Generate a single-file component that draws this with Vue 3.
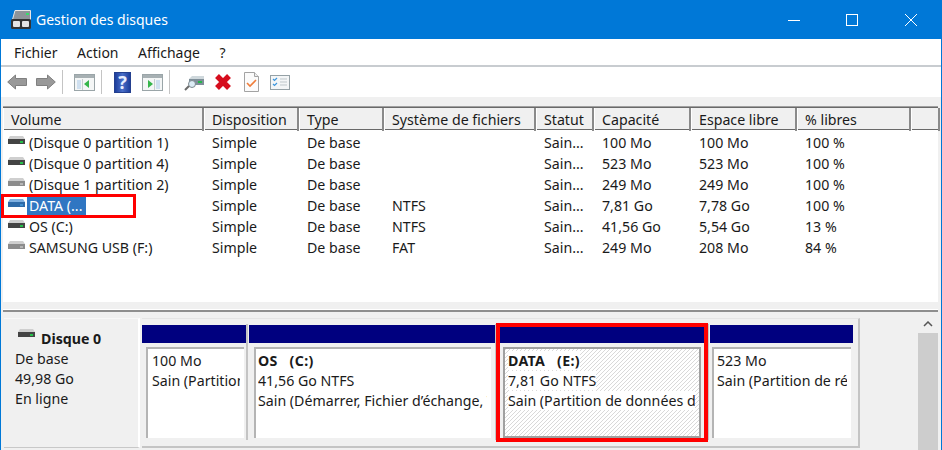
<script setup>
const columns = [
  { label: 'Volume', width: 201 },
  { label: 'Disposition', width: 95 },
  { label: 'Type', width: 85 },
  { label: 'Système de fichiers', width: 152 },
  { label: 'Statut', width: 58 },
  { label: 'Capacité', width: 97 },
  { label: 'Espace libre', width: 106 },
  { label: '% libres', width: 114 },
  { label: '', width: 29 },
]

const gridColumns = columns.map((c) => c.width + 'px').join(' ')

const volumes = [
  { name: '(Disque 0 partition 1)', fs: '', cap: '100 Mo', free: '100 Mo', pct: '100 %', green: true },
  { name: '(Disque 0 partition 4)', fs: '', cap: '523 Mo', free: '523 Mo', pct: '100 %', green: true },
  { name: '(Disque 1 partition 2)', fs: '', cap: '249 Mo', free: '249 Mo', pct: '100 %' },
  { name: 'DATA (...', fs: 'NTFS', cap: '7,81 Go', free: '7,78 Go', pct: '100 %', selected: true },
  { name: 'OS (C:)', fs: 'NTFS', cap: '41,56 Go', free: '5,54 Go', pct: '13 %', green: true },
  { name: 'SAMSUNG USB (F:)', fs: 'FAT', cap: '249 Mo', free: '208 Mo', pct: '84 %' },
]
</script>

<template>
  <div class="window">
    <div class="titlebar">
      <svg class="app-icon" width="20" height="19" viewBox="0 0 20 19">
        <path d="M4 .5h15.500v9H1.500z" fill="#8d9499" stroke="#e8e8e8" />
        <rect x="15" y="3" width="3" height="2" fill="#35e06a" />
        <rect x="0" y="9" width="20" height="10" rx="1.500" fill="#333" />
        <rect x="2" y="11" width="7" height="6" rx="1" fill="#e4e4e4" />
        <rect x="11" y="11" width="7" height="6" rx="1" fill="#e4e4e4" />
      </svg>
      <span class="title">Gestion des disques</span>
      <div class="win-buttons">
        <svg width="58" height="12" viewBox="0 0 58 12"><path d="M23 6.500h12" stroke="#fff" fill="none" /></svg>
        <svg width="58" height="12" viewBox="0 0 58 12"><rect x="23.500" y="0.500" width="11" height="11" stroke="#fff" fill="none" /></svg>
        <svg width="58" height="12" viewBox="0 0 58 12"><path d="M24 0l12 12M36 0L24 12" stroke="#fff" fill="none" /></svg>
      </div>
    </div>

    <div class="menubar">
      <span>Fichier</span>
      <span>Action</span>
      <span>Affichage</span>
      <span>?</span>
    </div>

    <div class="toolbar">
      <svg class="tb-arrow" width="20" height="16" viewBox="0 0 20 16">
        <path d="M.7 8L8.500 1v3.500h11v7h-11V15z" fill="#999" stroke="#808080" />
      </svg>
      <svg class="tb-arrow" width="20" height="16" viewBox="0 0 20 16">
        <path d="M19.300 8L11.500 1v3.500H.5v7h11V15z" fill="#999" stroke="#808080" />
      </svg>
      <i class="tb-sep"></i>
      <svg width="21" height="17" viewBox="0 0 21 17">
        <rect x="0.500" y="0.500" width="20" height="16" fill="#f4f6f6" stroke="#9aa5a8" />
        <rect x="1" y="1" width="19" height="3" fill="#a7b0b3" />
        <rect x="3" y="6" width="4" height="9" fill="#cfe0f0" />
        <path d="M15 6v8l-5-4z" fill="#35b54a" />
        <path d="M8.500 5v11" stroke="#c5cdd0" />
      </svg>
      <i class="tb-sep"></i>
      <div class="tb-help">?</div>
      <svg width="21" height="17" viewBox="0 0 21 17">
        <rect x="0.500" y="0.500" width="20" height="16" fill="#f4f6f6" stroke="#9aa5a8" />
        <rect x="1" y="1" width="19" height="3" fill="#a7b0b3" />
        <rect x="14" y="6" width="4" height="9" fill="#cfe0f0" />
        <path d="M6 6v8l5-4z" fill="#35b54a" />
        <path d="M12.500 5v11" stroke="#c5cdd0" />
      </svg>
      <i class="tb-sep"></i>
      <svg class="tb-drive" width="20" height="18" viewBox="0 0 20 18">
        <path d="M5 6h15v6H5z" fill="#7f8f99" />
        <path d="M5 6l3-3h12v3z" fill="#cfd8dc" />
        <rect x="14" y="8" width="4" height="2" fill="#25b84a" />
        <circle cx="8" cy="11" r="3.500" fill="#dcecf5" stroke="#7e8a90" />
        <path d="M5 13l-4 4" stroke="#6a6a6a" stroke-width="2" />
      </svg>
      <svg class="tb-x" width="18" height="18" viewBox="0 0 18 18">
        <path d="M3 3l12 12M15 3L3 15" fill="none" stroke="#d60d1d" stroke-width="5.500" />
      </svg>
      <svg class="tb-doc" width="15" height="20" viewBox="0 0 15 20">
        <path d="M.5.5h10l4 4v15H.5z" fill="#fbfbfb" stroke="#a3a3a3" />
        <path d="M10.500.5v4h4" fill="#eee" stroke="#a3a3a3" />
        <path d="M3 11l3 3 6-6" fill="none" stroke="#ef7d3a" stroke-width="1.600" />
      </svg>
      <svg width="20" height="15" viewBox="0 0 20 15">
        <rect x="0.500" y="0.500" width="19" height="14" fill="#f4f6f7" stroke="#95a1a6" />
        <path d="M3 4l1.500 1.500L7 3M3 9l1.500 1.500L7 8" fill="none" stroke="#3d96dc" stroke-width="1.200" />
        <path d="M10 4h7M10 7h7M10 10h7" stroke="#bfc7cb" />
      </svg>
    </div>

    <div class="content">
      <div class="table">
        <div class="thead" :style="{ gridTemplateColumns: gridColumns }">
          <div v-for="col in columns" :key="col.label" class="th">{{ col.label }}</div>
        </div>
        <div class="tbody">
          <div
            v-for="v in volumes"
            :key="v.name"
            class="tr"
            :style="{ gridTemplateColumns: gridColumns }"
          >
            <div class="td first">
              <svg width="17" height="10" viewBox="0 0 17 10" class="drive">
                <path d="M2 0h13l2 3H0z" :fill="v.selected ? '#7fb0e0' : '#cfcfcf'" />
                <rect y="3" width="17" height="5" :fill="v.selected ? '#2d6aa8' : (v.green ? '#444' : '#8c8c8c')" />
                <rect x="12" y="5" width="3" height="2" :fill="v.green ? '#25c04a' : (v.selected ? '#3f8fd0' : '#b5b5b5')" />
              </svg>
              <span :class="{ sel: v.selected }">{{ v.name }}</span>
            </div>
            <div class="td">Simple</div>
            <div class="td">De base</div>
            <div class="td">{{ v.fs }}</div>
            <div class="td">Sain...</div>
            <div class="td">{{ v.cap }}</div>
            <div class="td">{{ v.free }}</div>
            <div class="td">{{ v.pct }}</div>
          </div>
        </div>
        <div class="red-row"></div>
      </div>

      <div class="splitter"></div>

      <div class="lower">
        <div class="disk-label">
          <div class="disk-name">
            <svg width="17" height="9" viewBox="0 0 17 9">
              <path d="M2 0h13l2 3H0z" fill="#cfcfcf" />
              <rect y="3" width="17" height="5" fill="#444" />
              <rect x="12" y="5" width="3" height="2" fill="#25c04a" />
            </svg>
            <b>Disque 0</b>
          </div>
          <div>De base</div>
          <div>49,98 Go</div>
          <div>En ligne</div>
        </div>

        <div class="disk-map">
          <div class="part p1">
            <div class="bar"></div>
            <div class="cell">
              <div class="clip"><div class="blank"></div><div>100 Mo</div><div>Sain (Partition de</div></div>
            </div>
          </div>
          <div class="part p2">
            <div class="bar"></div>
            <div class="cell">
              <div class="clip"><b class="vol">OS&nbsp; (C:)</b><div>41,56 Go NTFS</div><div>Sain (Démarrer, Fichier d’échange, Vidage)</div></div>
            </div>
          </div>
          <div class="part p3">
            <div class="bar"></div>
            <div class="cell hatch">
              <div class="clip"><b class="vol"><em>DATA&nbsp; (E:)</em></b><div><em>7,81 Go NTFS</em></div><div><em>Sain (Partition de données de base)</em></div></div>
            </div>
          </div>
          <div class="part p4">
            <div class="bar"></div>
            <div class="cell">
              <div class="clip"><div class="blank"></div><div>523 Mo</div><div>Sain (Partition de récupération)</div></div>
            </div>
          </div>
          <div class="red-part"></div>
        </div>

        <div class="scroll">
          <svg width="10" height="6" viewBox="0 0 10 6"><path d="M1 5l4-4 4 4" fill="none" stroke="#555" stroke-width="1.500" /></svg>
          <div class="thumb"></div>
        </div>
      </div>
    </div>
  </div>
</template>

<style>
html, body {
  margin: 0;
  background: #fff;
}
</style>

<style scoped>
.window {
  width: 942px;
  height: 450px;
  overflow: hidden;
  box-sizing: border-box;
  border-left: 1px solid #0078d7;
  border-right: 1px solid #0078d7;
  font-family: "Noto Sans", sans-serif;
  font-size: 14.2px;
  color: #1a1a1a;
  display: flex;
  flex-direction: column;
  background: #f0f0f0;
}
.titlebar {
  height: 39px;
  flex: none;
  background: #0078d7;
  color: #fff;
  display: flex;
  align-items: center;
  padding-left: 10px;
}
.app-icon { margin-right: 5px; }
.title { font-size: 14px; }
.win-buttons {
  margin-left: auto;
  display: flex;
  padding-right: 2px;
}
.menubar {
  height: 28px;
  flex: none;
  box-sizing: border-box;
  background: #fff;
  border-bottom: 2px solid #c8ccd0;
  display: flex;
  align-items: center;
  padding-left: 13px;
  gap: 19.500px;
  font-size: 14px;
}
.toolbar {
  height: 30px;
  flex: none;
  background: #fff;
  display: flex;
  align-items: center;
  padding-left: 6px;
}
.tb-arrow + .tb-arrow { margin-left: 9px; }
.tb-sep {
  width: 1px;
  height: 24px;
  background: #c4c4c4;
  margin: 0 11px 0 6px;
}
.tb-help {
  width: 17px;
  height: 21px;
  box-sizing: border-box;
  border: 1px solid #24408f;
  background: linear-gradient(90deg, #1d3e9c, #4a6fc8 50%, #1d3e9c);
  color: #e8eeff;
  text-align: center;
  line-height: 19px;
  font-size: 18px;
  font-weight: 700;
  margin-left: 1px;
  margin-right: 11px;
}
.tb-drive { margin-left: 3px; margin-right: 10px; }
.tb-x { margin-right: 12px; }
.tb-doc { margin-right: 11px; }
.content {
  flex: 1;
  display: flex;
  flex-direction: column;
  min-height: 0;
  padding-top: 9px;
}
.table {
  position: relative;
  height: 195px;
  flex: none;
  margin-left: 2px;
  margin-right: 3px;
  background: #fff;
  border-top: 1px solid #a0a0a0;
}
.thead {
  display: grid;
  height: 23px;
  background: #f0f0f0;
  box-sizing: border-box;
  border-top: 1px solid #696969;
  border-bottom: 1px solid #696969;
}
.th {
  box-sizing: border-box;
  border-right: 2px solid #8a8a8a;
  border-left: 1px solid #fff;
  padding-left: 7px;
  line-height: 23px;
  white-space: nowrap;
}
.tbody { padding-top: 2px; }
.tr {
  display: grid;
  height: 21px;
  line-height: 21px;
}
.td {
  padding-left: 8px;
  white-space: nowrap;
  overflow: hidden;
}
.td.first {
  padding-left: 5px;
  display: flex;
  align-items: center;
  gap: 4px;
}
.drive { flex: none; margin-top: -3px; }
.sel {
  background: #3076c2;
  color: #fff;
  padding: 0 4px 0 2px;
  margin-left: -2px;
  line-height: 20px;
}
.red-row {
  position: absolute;
  left: -2px;
  top: 87px;
  box-sizing: border-box;
  width: 135px;
  height: 24px;
  border: 3px solid #f00;
}
.splitter {
  height: 2px;
  margin: 7px 3px 0 2px;
  flex: none;
  background: #8e8e8e;
  border-top: 1px solid #fff;
}
.lower {
  flex: 1;
  display: flex;
  padding-top: 6px;
  min-height: 0;
}
.disk-label {
  width: 136px;
  height: 130px;
  flex: none;
  box-sizing: border-box;
  margin-left: 3px;
  border-right: 2px solid #fff;
  border-top: 1px solid #f8f8f8;
  border-bottom: 1px solid #c8c8c8;
  padding: 7px 0 0 11px;
  line-height: 20px;
}
.disk-name {
  display: flex;
  gap: 6px;
  align-items: flex-start;
  padding-left: 3px;
}
.disk-name svg { margin-top: 3px; }
.disk-name b { margin-top: 3px; }
.disk-map {
  position: relative;
  width: 718px;
  flex: none;
  height: 130px;
  box-sizing: border-box;
  margin-left: 2px;
  border-right: 2px solid #c4c4c4;
  border-bottom: 2px solid #c4c4c4;
  border-top: 1px solid #e4e4e4;
  padding: 6px 5px 0 0;
  display: flex;
  gap: 3px;
}
.part {
  position: relative;
  display: flex;
  flex-direction: column;
  min-width: 0;
  flex: none;
}
.part + .part::before {
  content: "";
  position: absolute;
  left: -3px;
  top: -1px;
  bottom: 6px;
  width: 2px;
  background: #c4c4c4;
}
.p1 { width: 104px; }
.p2 { width: 246px; }
.p3 { width: 209px; }
.p4 { width: 143px; }
.bar {
  height: 18px;
  flex: none;
  background: #00007f;
  margin-bottom: 4px;
}
.cell {
  height: 91px;
  flex: none;
  box-sizing: border-box;
  background: #fff;
  border-top: 2px solid #b4b4b4;
  border-left: 2px solid #b4b4b4;
  padding: 2px 4px 0 4px;
  line-height: 20px;
}
.clip {
  white-space: nowrap;
  overflow: hidden;
}
.p1 .cell { margin: 0 2px 0 4px; }
.p2 .cell { margin: 0 4px 0 5px; padding-left: 2px; }
.p3 .cell {
  margin: 0 6px 0 5px;
  padding-left: 3px;
  border: 2px solid #a0a0a0;
}
.p4 .cell { margin: 0 2px 0 2px; padding-left: 3px; }
.vol {
  display: block;
  word-spacing: 2px;
  letter-spacing: .3px;
}
.hatch {
  background: repeating-linear-gradient(135deg, #d9d9d9 0 1px, #fff 1px 2.830px);
}
.hatch em {
  font-style: normal;
  background: #fff;
}
.red-part {
  position: absolute;
  left: 354px;
  top: 4px;
  width: 212px;
  height: 119px;
  box-sizing: border-box;
  border: 4px solid #f00;
  pointer-events: none;
}
.scroll {
  margin-left: auto;
  margin-right: 3px;
  width: 20px;
  flex: none;
  background: #f0f0f0;
  display: flex;
  flex-direction: column;
  align-items: center;
  padding-top: 3px;
}
.thumb {
  margin-top: 6px;
  flex: 1;
  align-self: stretch;
  background: #cdcdcd;
}
</style>
